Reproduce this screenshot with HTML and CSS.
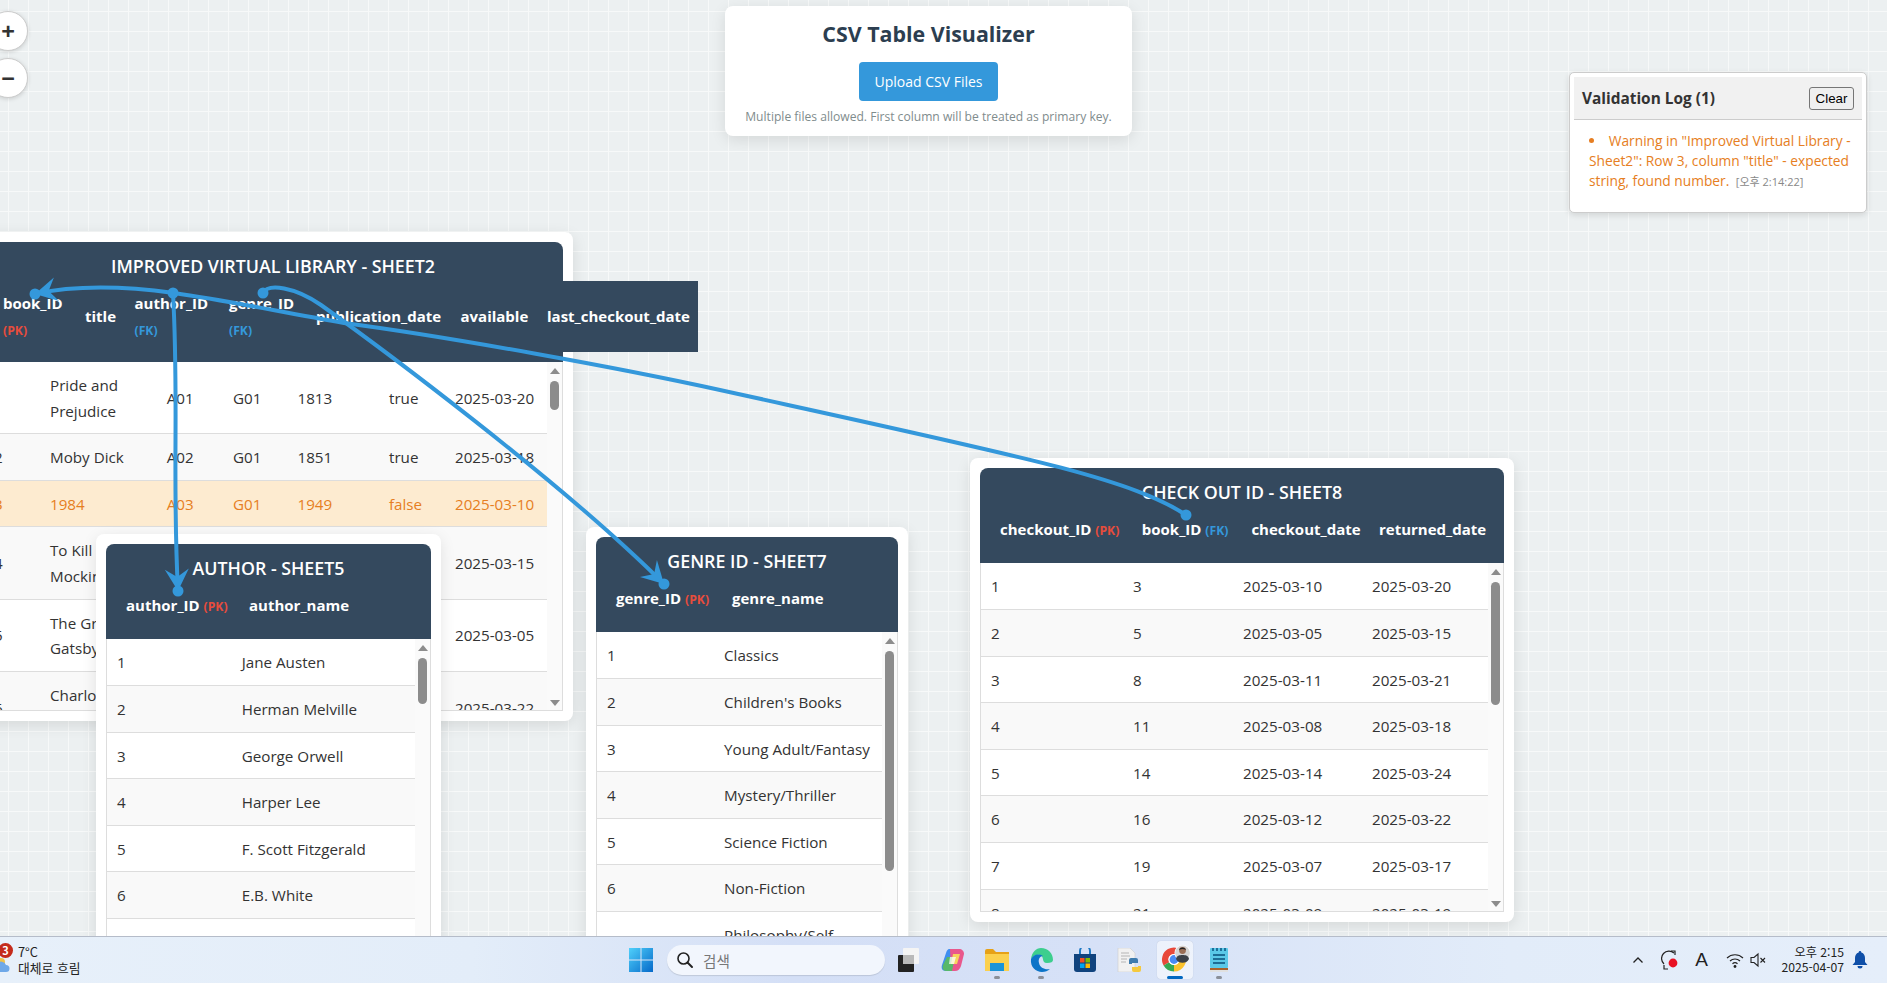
FILE: index.html
```html
<!DOCTYPE html>
<html lang="ko">

<head>
    <meta charset="UTF-8">
    <title>CSV Table Visualizer</title>
    <link rel="stylesheet" href="styles.css">
</head>

<body>
    <div class="canvas">

        <div class="zoom-controls">
            <button class="zoom-btn">+</button>
            <button class="zoom-btn">&minus;</button>
        </div>

        <div class="upload-card">
            <h1>CSV Table Visualizer</h1>
            <button class="upload-btn">Upload CSV Files</button>
            <p>Multiple files allowed. First column will be treated as primary key.</p>
        </div>

        <div class="log-panel">
            <div class="log-head">
                <h3>Validation Log (1)</h3>
                <button class="clear-btn">Clear</button>
            </div>
            <ul class="log-list">
                <li>Warning in "Improved Virtual Library - Sheet2": Row 3, column "title" - expected string, found number. <span class="log-time">[오후 2:14:22]</span></li>
            </ul>
        </div>

        <!-- Library table -->
        <div class="card card-main">
            <div class="card-head">
                <h2>IMPROVED VIRTUAL LIBRARY - SHEET2</h2>
                <table class="head-table">
                    <tr>
                        <th>book_ID <span class="key key-pk stacked">(PK)</span></th>
                        <th>title</th>
                        <th>author_ID <span class="key key-fk stacked">(FK)</span></th>
                        <th>genre_ID <span class="key key-fk stacked">(FK)</span></th>
                        <th>publication_date</th>
                        <th>available</th>
                        <th>last_checkout_date</th>
                    </tr>
                </table>
            </div>
            <div class="card-body">
                <div class="rows">
                    <table class="body-table">
                        <tr><td>1</td><td>Pride and Prejudice</td><td>A01</td><td>G01</td><td>1813</td><td>true</td><td>2025-03-20</td></tr>
                        <tr><td>2</td><td>Moby Dick</td><td>A02</td><td>G01</td><td>1851</td><td>true</td><td>2025-03-18</td></tr>
                        <tr class="row-warn"><td>3</td><td>1984</td><td>A03</td><td>G01</td><td>1949</td><td>false</td><td>2025-03-10</td></tr>
                        <tr><td>4</td><td>To Kill a Mockingbird</td><td>A04</td><td>G01</td><td>1960</td><td>true</td><td>2025-03-15</td></tr>
                        <tr><td>5</td><td>The Great Gatsby</td><td>A05</td><td>G01</td><td>1925</td><td>true</td><td>2025-03-05</td></tr>
                        <tr><td>6</td><td>Charlotte's Web</td><td>A06</td><td>G02</td><td>1952</td><td>true</td><td>2025-03-22</td></tr>
                    </table>
                </div>
                <div class="scrollbar">
                    <span class="arrow-up"></span>
                    <span class="thumb"></span>
                    <span class="arrow-down"></span>
                </div>
            </div>
        </div>

        <!-- Author table -->
        <div class="card card-author">
            <div class="card-head">
                <h2>AUTHOR - SHEET5</h2>
                <table class="head-table">
                    <tr>
                        <th>author_ID <span class="key key-pk">(PK)</span></th>
                        <th>author_name</th>
                    </tr>
                </table>
            </div>
            <div class="card-body">
                <div class="rows">
                    <table class="body-table">
                        <tr><td>1</td><td>Jane Austen</td></tr>
                        <tr><td>2</td><td>Herman Melville</td></tr>
                        <tr><td>3</td><td>George Orwell</td></tr>
                        <tr><td>4</td><td>Harper Lee</td></tr>
                        <tr><td>5</td><td>F. Scott Fitzgerald</td></tr>
                        <tr><td>6</td><td>E.B. White</td></tr>
                        <tr><td>7</td><td>J.K. Rowling</td></tr>
                    </table>
                </div>
                <div class="scrollbar">
                    <span class="arrow-up"></span>
                    <span class="thumb"></span>
                </div>
            </div>
        </div>

        <!-- Genre table -->
        <div class="card card-genre">
            <div class="card-head">
                <h2>GENRE ID - SHEET7</h2>
                <table class="head-table">
                    <tr>
                        <th>genre_ID <span class="key key-pk">(PK)</span></th>
                        <th>genre_name</th>
                    </tr>
                </table>
            </div>
            <div class="card-body">
                <div class="rows">
                    <table class="body-table">
                        <tr><td>1</td><td>Classics</td></tr>
                        <tr><td>2</td><td>Children's Books</td></tr>
                        <tr><td>3</td><td>Young Adult/Fantasy</td></tr>
                        <tr><td>4</td><td>Mystery/Thriller</td></tr>
                        <tr><td>5</td><td>Science Fiction</td></tr>
                        <tr><td>6</td><td>Non-Fiction</td></tr>
                        <tr><td>7</td><td>Philosophy/Self-<br>Help</td></tr>
                    </table>
                </div>
                <div class="scrollbar">
                    <span class="arrow-up"></span>
                    <span class="thumb"></span>
                </div>
            </div>
        </div>

        <!-- Checkout table -->
        <div class="card card-checkout">
            <div class="card-head">
                <h2>CHECK OUT ID - SHEET8</h2>
                <table class="head-table">
                    <tr>
                        <th>checkout_ID <span class="key key-pk">(PK)</span></th>
                        <th>book_ID <span class="key key-fk">(FK)</span></th>
                        <th>checkout_date</th>
                        <th>returned_date</th>
                    </tr>
                </table>
            </div>
            <div class="card-body">
                <div class="rows">
                    <table class="body-table">
                        <tr><td>1</td><td>3</td><td>2025-03-10</td><td>2025-03-20</td></tr>
                        <tr><td>2</td><td>5</td><td>2025-03-05</td><td>2025-03-15</td></tr>
                        <tr><td>3</td><td>8</td><td>2025-03-11</td><td>2025-03-21</td></tr>
                        <tr><td>4</td><td>11</td><td>2025-03-08</td><td>2025-03-18</td></tr>
                        <tr><td>5</td><td>14</td><td>2025-03-14</td><td>2025-03-24</td></tr>
                        <tr><td>6</td><td>16</td><td>2025-03-12</td><td>2025-03-22</td></tr>
                        <tr><td>7</td><td>19</td><td>2025-03-07</td><td>2025-03-17</td></tr>
                        <tr><td>8</td><td>21</td><td>2025-03-09</td><td>2025-03-19</td></tr>
                    </table>
                </div>
                <div class="scrollbar">
                    <span class="arrow-up"></span>
                    <span class="thumb"></span>
                    <span class="arrow-down"></span>
                </div>
            </div>
        </div>

        <!-- Relation lines between the tables -->
        <svg class="links" width="1887" height="983" viewBox="0 0 1887 983">
            <defs>
                <marker id="head" markerUnits="userSpaceOnUse" markerWidth="26" markerHeight="28" refX="24" refY="14" orient="auto">
                    <path d="M24 14 L2 2 L10 14 L2 26 Z" fill="#3498db" />
                </marker>
            </defs>
            <path class="link" marker-end="url(#head)" d="M1186 515 C1130 478 1020 456 720 390 C620 368 450 337 344 323 C280 312 230 301 174 293 C130 287 80 284 35 294" />
            <path class="link" marker-end="url(#head)" d="M173 293 C179 400 172 480 178 591" />
            <path class="link" marker-end="url(#head)" d="M263 293 C268 283 295 287 321 305 C370 340 560 480 664 584" />
            <circle class="dot" cx="35" cy="294" r="5.5" />
            <circle class="dot" cx="173" cy="293" r="5.5" />
            <circle class="dot" cx="263" cy="293" r="5.5" />
            <circle class="dot" cx="178" cy="591" r="5.5" />
            <circle class="dot" cx="664" cy="584" r="5.5" />
            <circle class="dot" cx="1186" cy="515" r="5.5" />
        </svg>

        <!-- Windows taskbar -->
        <div class="taskbar">
            <div class="weather">
                <span class="weather-badge">3</span>
                <svg class="weather-cloud" width="14" height="16" viewBox="0 0 14 16">
                    <circle cx="4" cy="5" r="4" fill="#f0c24a" />
                    <path d="M1 15 a4 4 0 0 1 -1 -8 a5 5 0 0 1 9 1 a3.5 3.5 0 0 1 0 7 Z" fill="#6ea8e8" />
                </svg>
                <div class="weather-text">
                    <span>7°C</span>
                    <span>대체로 흐림</span>
                </div>
            </div>

            <div class="task-center">
                <span class="task-icon">
                    <svg width="24" height="24" viewBox="0 0 24 24">
                        <defs>
                            <linearGradient id="win" x1="0" y1="0" x2="1" y2="1">
                                <stop offset="0" stop-color="#4fd0fb" />
                                <stop offset="1" stop-color="#0669c9" />
                            </linearGradient>
                        </defs>
                        <path d="M0 0 H11.5 V11.5 H0 Z M12.5 0 H24 V11.5 H12.5 Z M0 12.5 H11.5 V24 H0 Z M12.5 12.5 H24 V24 H12.5 Z" fill="url(#win)" />
                    </svg>
                </span>
                <div class="search-box">
                    <svg width="18" height="18" viewBox="0 0 18 18">
                        <circle cx="7.5" cy="7.5" r="5.5" fill="none" stroke="#222" stroke-width="1.6" />
                        <path d="M11.5 11.5 L16 16" stroke="#222" stroke-width="2" stroke-linecap="round" />
                    </svg>
                    <span>검색</span>
                </div>
                <span class="task-icon icon-taskview">
                    <svg width="22" height="24" viewBox="0 0 22 24">
                        <rect x="0" y="7" width="16" height="17" rx="1" fill="#222" />
                        <rect x="5" y="0" width="16" height="16" rx="1" fill="#f4f4f4" />
                        <rect x="5" y="7" width="11" height="9" fill="#b9b9b9" />
                    </svg>
                </span>
                <span class="task-icon">
                    <svg width="24" height="24" viewBox="0 0 24 24">
                        <path d="M8 1 H15 L11 23 H5 C1 23 0 20 1 17 L5 5 C6 2 7 1 8 1 Z" fill="#3f8ef0" />
                        <path d="M9 1 H18 C21 1 23 3 23 6 L20 18 C19 21 17 23 14 23 H10 Z" fill="#e9588c" />
                        <path d="M6 9 H14 L11 23 H5 C2 23 1 20 2 17 Z" fill="#58b86a" />
                        <path d="M12 6 H19 L16 16 H10 Z" fill="#f6d55c" />
                        <path d="M9 9 H15 L13 16 H8 Z" fill="#fff" opacity=".75" />
                    </svg>
                </span>
                <span class="task-icon running">
                    <svg width="24" height="22" viewBox="0 0 24 22">
                        <path d="M0 2 a2 2 0 0 1 2 -2 H8 L11 3 H24 V22 H0 Z" fill="#e6a117" />
                        <rect x="0" y="5" width="24" height="17" fill="#fbd04d" />
                        <rect x="5" y="14" width="14" height="8" fill="#1a94d8" />
                    </svg>
                </span>
                <span class="task-icon running">
                    <svg width="24" height="24" viewBox="0 0 24 24">
                        <path d="M12 0 C19 0 24 5 24 12 C24 14 22 15 18 15 C12 15 16 9 11 7 C6 6 3 10 2 11 C3 4 7 0 12 0 Z" fill="#3dce8e" />
                        <path d="M2 11 C1 19 7 24 13 24 C16 24 19 23 21 21 C16 22 11 20 10 15 C9 11 11 8 14 8 C9 5 4 7 2 11 Z" fill="#0c74c8" />
                    </svg>
                </span>
                <span class="task-icon">
                    <svg width="24" height="24" viewBox="0 0 24 24">
                        <path d="M7 7 V3 a5 5 0 0 1 10 0 V7" fill="none" stroke="#1f7ac4" stroke-width="2" />
                        <path d="M1 6 H23 V21 a3 3 0 0 1 -3 3 H4 a3 3 0 0 1 -3 -3 Z" fill="#10437e" />
                        <rect x="7" y="10" width="4.5" height="4.5" fill="#f25022" />
                        <rect x="12.5" y="10" width="4.5" height="4.5" fill="#7fba00" />
                        <rect x="7" y="15.5" width="4.5" height="4.5" fill="#00a4ef" />
                        <rect x="12.5" y="15.5" width="4.5" height="4.5" fill="#ffb900" />
                    </svg>
                </span>
                <span class="task-icon">
                    <svg width="24" height="24" viewBox="0 0 24 24">
                        <path d="M1 0 H13 L18 5 V24 H1 Z" fill="#f1f1f1" stroke="#ccc" stroke-width=".6" />
                        <path d="M4 5 H12 M4 8 H13 M4 11 H10 M4 14 H9" stroke="#b5b5b5" />
                        <path d="M15 10 h4 a2 2 0 0 1 2 2 v3 h-6 v1 h-3 v-4 a2 2 0 0 1 2 -2 Z" fill="#3f7cae" />
                        <path d="M21 24 h-4 a2 2 0 0 1 -2 -2 v-3 h6 v-1 h3 v4 a2 2 0 0 1 -2 2 Z" fill="#f5c93d" />
                    </svg>
                </span>
                <span class="task-icon active">
                    <svg width="30" height="30" viewBox="0 0 30 30">
                        <path d="M21.58 10.1 A8.75 8.75 0 0 0 6.42 18.9" fill="none" stroke="#e8483a" stroke-width="6.5" />
                        <path d="M6.42 18.9 A8.75 8.75 0 0 0 14 23.25" fill="none" stroke="#37a853" stroke-width="6.5" />
                        <path d="M14 23.25 A8.75 8.75 0 0 0 21.58 10.1" fill="none" stroke="#fbc22d" stroke-width="6.5" />
                        <circle cx="14" cy="14.5" r="5.6" fill="#fff" />
                        <circle cx="14" cy="14.5" r="4.4" fill="#4a8af4" />
                        <circle cx="22.5" cy="8" r="8" fill="#fff" />
                        <circle cx="22.5" cy="8" r="7.4" fill="#d5d5d5" />
                        <path d="M16 14 C16.5 10.5 19.5 10 22.5 10 C25.5 10 28.5 10.5 29 14 A7.4 7.4 0 0 1 16 14 Z" fill="#3c4148" />
                        <circle cx="22.5" cy="5.5" r="3.4" fill="#9a6e55" />
                        <path d="M19.1 5 C19.1 1.6 25.9 1.6 25.9 5 C23.5 3.6 21.5 3.6 19.1 5 Z" fill="#222" />
                    </svg>
                </span>
                <span class="task-icon running">
                    <svg width="18" height="24" viewBox="0 0 18 24">
                        <rect x="0" y="0" width="18" height="20" rx="1" fill="#5ac8e8" />
                        <path d="M3 0 V3 M7 0 V3 M11 0 V3 M15 0 V3" stroke="#1e6f9a" stroke-width="2" />
                        <path d="M3 7 H15 M3 11 H15 M3 15 H15" stroke="#1c6d96" stroke-width="2" />
                        <rect x="0" y="20" width="18" height="2" fill="#a8612c" />
                        <rect x="0" y="22" width="18" height="2" fill="#e0e0e0" />
                    </svg>
                </span>
            </div>

            <div class="tray">
                <svg width="12" height="8" viewBox="0 0 12 8">
                    <path d="M1.5 6.5 L6 2 L10.5 6.5" fill="none" stroke="#222" stroke-width="1.3" />
                </svg>
                <svg class="tray-gap" width="18" height="20" viewBox="0 0 18 20">
                    <path d="M3 14 A7 7 0 0 1 13 3" fill="none" stroke="#222" stroke-width="1.2" />
                    <path d="M10 1 H14 V5" fill="none" stroke="#222" stroke-width="1.2" />
                    <path d="M3 15 V19 H7" fill="none" stroke="#222" stroke-width="1.2" />
                    <circle cx="12" cy="13" r="4.4" fill="#e81123" />
                </svg>
                <span class="tray-ime">A</span>
                <svg class="tray-wifi" width="18" height="18" viewBox="0 0 18 18">
                    <path d="M1 7 A11.5 11.5 0 0 1 17 7 M4 10 A7.2 7.2 0 0 1 14 10 M6.5 12.8 A3.6 3.6 0 0 1 11.5 12.8" fill="none" stroke="#222" stroke-width="1.2" />
                    <circle cx="9" cy="15.5" r="1.4" fill="#222" />
                </svg>
                <svg class="tray-sound" width="16" height="16" viewBox="0 0 16 16">
                    <path d="M1 5.5 H4 L8 2 V14 L4 10.5 H1 Z" fill="none" stroke="#222" stroke-width="1.1" />
                    <path d="M10.5 6 L15 10.5 M15 6 L10.5 10.5" stroke="#222" stroke-width="1.1" />
                </svg>
                <div class="clock">
                    <span>오후 2:15</span>
                    <span>2025-04-07</span>
                </div>
                <svg class="tray-bell" width="16" height="18" viewBox="0 0 16 18">
                    <path d="M8 0 a1.3 1.3 0 0 1 1.3 1.4 C12 2.2 13 4.4 13 7 V11 L15.5 14 H0.5 L3 11 V7 C3 4.4 4 2.2 6.7 1.4 A1.3 1.3 0 0 1 8 0 Z" fill="#0f4fa8" />
                    <path d="M5.5 15 H10.5 A2.5 2.5 0 0 1 5.5 15 Z" fill="#0f4fa8" />
                </svg>
            </div>
        </div>
    </div>
</body>

</html>
```

FILE: styles.css
```css
* {
    box-sizing: border-box;
}

body {
    margin: 0;
    font-family: "Open Sans", "Noto Sans CJK KR", sans-serif;
    color: #333;
    overflow: hidden;
}

.canvas {
    position: relative;
    width: 1887px;
    height: 983px;
    overflow: hidden;
    background-color: #ecf0f1;
    background-image:
        linear-gradient(to right, #f7f9f9 1px, transparent 1px),
        linear-gradient(to bottom, #f7f9f9 1px, transparent 1px);
    background-size: 20px 20px;
    background-position: 8px 11px;
}

/* zoom buttons */
.zoom-controls {
    position: absolute;
    left: -12px;
    top: 11px;
    display: flex;
    flex-direction: column;
    gap: 7px;
}

.zoom-btn {
    width: 40px;
    height: 40px;
    padding: 0;
    border: 1px solid #ccc;
    border-radius: 50%;
    background: #fff;
    box-shadow: 0 1px 4px rgba(0, 0, 0, 0.15);
    color: #333;
    font-family: "Open Sans", sans-serif;
    font-size: 24px;
    font-weight: 700;
    line-height: 34px;
}

/* upload panel */
.upload-card {
    position: absolute;
    left: 725px;
    top: 6px;
    width: 407px;
    height: 130px;
    padding: 15px 0 0;
    background: #fff;
    border-radius: 8px;
    box-shadow: 0 4px 15px rgba(0, 0, 0, 0.1);
    display: flex;
    flex-direction: column;
    align-items: center;
}

.upload-card h1 {
    margin: 0;
    font-size: 21.4px;
    line-height: 26px;
    font-weight: 700;
    color: #2c3e50;
}

.upload-btn {
    margin-top: 15px;
    width: 139px;
    height: 39px;
    padding: 0;
    border: none;
    border-radius: 4px;
    background: #3498db;
    color: #fff;
    font-family: inherit;
    font-size: 14px;
}

.upload-card p {
    margin: 6px 0 0;
    font-size: 12.1px;
    line-height: 20px;
    color: #7f8c8d;
}

/* validation log */
.log-panel {
    position: absolute;
    left: 1569px;
    top: 72px;
    width: 298px;
    height: 141px;
    padding: 4px;
    background: #fff;
    border: 1px solid #ccc;
    border-radius: 5px;
    box-shadow: 0 2px 6px rgba(0, 0, 0, 0.12);
}

.log-head {
    display: flex;
    align-items: center;
    justify-content: space-between;
    height: 43px;
    padding: 0 8px;
    background: #f1f1f1;
    border-bottom: 1px solid #ccc;
}

.log-head h3 {
    margin: 0;
    font-size: 15.4px;
    font-weight: 700;
    color: #333;
}

.clear-btn {
    width: 45px;
    height: 23px;
    padding: 0;
    background: #efefef;
    border: 1px solid #767676;
    border-radius: 3px;
    color: #000;
    font-family: "Liberation Sans", sans-serif;
    font-size: 13.3px;
}

.log-list {
    margin: 0;
    padding: 11px 6px 0 15px;
    list-style: disc inside;
    font-size: 13.75px;
    line-height: 20px;
    color: #e67e22;
}

.log-time {
    margin-left: 3px;
    font-size: 11px;
    color: #888;
}

/* table cards */
.card {
    position: absolute;
    padding: 10px;
    background: #fff;
    border-radius: 8px;
    box-shadow: 0 4px 15px rgba(0, 0, 0, 0.1);
    display: flex;
    flex-direction: column;
}

.card-main {
    left: -27px;
    top: 232px;
    width: 600px;
    height: 489px;
}

.card-author {
    left: 96px;
    top: 534px;
    width: 345px;
    height: 480px;
}

.card-genre {
    left: 586px;
    top: 527px;
    width: 322px;
    height: 480px;
}

.card-checkout {
    left: 970px;
    top: 458px;
    width: 544px;
    height: 464px;
}

.card-head {
    padding: 10px;
    background: #34495e;
    border-radius: 8px 8px 0 0;
    color: #fff;
}

.card-head h2 {
    margin: 0;
    font-size: 17.8px;
    line-height: 28.8px;
    font-weight: 600;
    text-align: center;
}

.head-table,
.body-table {
    border-collapse: collapse;
    table-layout: fixed;
}

.head-table {
    background: #34495e;
}

.head-table th {
    padding: 10px;
    font-size: 15px;
    font-weight: 700;
    line-height: 25.6px;
    text-align: left;
    white-space: nowrap;
    overflow: visible;
}

.key {
    font-size: 12.2px;
    font-weight: 700;
}

.key-pk {
    color: #e74c3c;
}

.key-fk {
    color: #3498db;
}

.stacked {
    display: block;
    transform: translateY(2px);
}

.card-body {
    display: flex;
    flex: 1;
    min-height: 0;
    border: 1px solid #ddd;
    border-top: none;
}

.rows {
    flex: 1;
    overflow: hidden;
}

.body-table {
    width: 100%;
}

.body-table td {
    padding: 11px 10px 9px;
    font-size: 15.2px;
    line-height: 25.6px;
    color: #333;
    border-bottom: 1px solid #ddd;
    vertical-align: middle;
}

.body-table tr:nth-child(even) td {
    background: #f9f9f9;
}

.body-table tr.row-warn td {
    background: #fdebd0;
    color: #e67e22;
}

/* scroll gutter */
.scrollbar {
    flex: none;
    width: 15px;
    background: #fafafa;
    display: flex;
    flex-direction: column;
    align-items: center;
    padding: 6px 0 4px;
}

.arrow-up,
.arrow-down {
    width: 0;
    height: 0;
    border-left: 5px solid transparent;
    border-right: 5px solid transparent;
}

.arrow-up {
    border-bottom: 6px solid #8c8c8c;
}

.arrow-down {
    margin-top: auto;
    border-top: 6px solid #8c8c8c;
}

.thumb {
    width: 9px;
    margin-top: 7px;
    border-radius: 5px;
    background: #8c8c8c;
}

/* column widths */
.card-main .head-table {
    width: 705px;
}

.card-main .head-table th:nth-child(1) { width: 82px; }
.card-main .head-table th:nth-child(2) { width: 49.5px; }
.card-main .head-table th:nth-child(3) { width: 94.5px; }
.card-main .head-table th:nth-child(4) { width: 87px; }
.card-main .head-table th:nth-child(5) { width: 144.5px; }
.card-main .head-table th:nth-child(6) { width: 86.5px; }
.card-main .head-table th:nth-child(7) { width: 161px; }

.card-main .body-table td:nth-child(1) { width: 56px; }
.card-main .body-table td:nth-child(2) { width: 116.7px; }
.card-main .body-table td:nth-child(3) { width: 66.3px; }
.card-main .body-table td:nth-child(4) { width: 64.5px; }
.card-main .body-table td:nth-child(5) { width: 91.5px; }
.card-main .body-table td:nth-child(6) { width: 66px; }
.card-main .body-table td:nth-child(7) { width: 102px; }

.card-author .head-table { width: 242px; }
.card-author .head-table th:nth-child(1) { width: 123px; }
.card-author .head-table th:nth-child(2) { width: 119px; }
.card-author .body-table td:nth-child(1) { width: 124.7px; }

.card-genre .head-table { width: 227px; }
.card-genre .head-table th:nth-child(1) { width: 116px; }
.card-genre .head-table th:nth-child(2) { width: 111px; }
.card-genre .body-table td:nth-child(1) { width: 117px; }

.card-checkout .head-table { width: 504.6px; }
.card-checkout .head-table th:nth-child(1) { width: 141.8px; }
.card-checkout .head-table th:nth-child(2) { width: 109.6px; }
.card-checkout .head-table th:nth-child(3) { width: 127.6px; }
.card-checkout .head-table th:nth-child(4) { width: 125.6px; }

.card-checkout .body-table td:nth-child(1) { width: 142px; }
.card-checkout .body-table td:nth-child(2) { width: 110px; }
.card-checkout .body-table td:nth-child(3) { width: 129px; }
.card-checkout .body-table td:nth-child(4) { width: 126px; }

/* scrollbar thumb sizes */
.card-main .thumb { height: 29px; }
.card-author .thumb { height: 46px; }
.card-genre .thumb { height: 220px; }
.card-checkout .thumb { height: 123px; }

/* relation lines */
.links {
    position: absolute;
    left: 0;
    top: 0;
    pointer-events: none;
}

.link {
    fill: none;
    stroke: #3498db;
    stroke-width: 4;
}

.dot {
    fill: #3498db;
}

/* taskbar */
.taskbar {
    position: absolute;
    left: 0;
    right: 0;
    bottom: 0;
    height: 47px;
    display: grid;
    grid-template-columns: 619px auto 1fr;
    align-items: center;
    border-top: 1px solid #b5bcc9;
    background: linear-gradient(90deg, #e7f0fa 0%, #e3edf9 25%, #d4dff6 42%, #d6e1f7 58%, #e2ecf9 80%, #e5eefa 100%);
    font-family: "Noto Sans CJK KR", "Noto Sans", sans-serif;
    color: #222;
}

.weather {
    position: relative;
    height: 46px;
}

.weather-badge {
    position: absolute;
    left: -2px;
    top: 6px;
    width: 15px;
    height: 15px;
    border-radius: 50%;
    background: #c42b1c;
    color: #fff;
    font-size: 11px;
    font-weight: 700;
    line-height: 15px;
    text-align: center;
}

.weather-cloud {
    position: absolute;
    left: -3px;
    top: 20px;
}

.weather-text {
    position: absolute;
    left: 18px;
    top: 7px;
    display: flex;
    flex-direction: column;
    font-size: 12.8px;
    line-height: 15.5px;
    white-space: nowrap;
}

.task-center {
    display: flex;
    align-items: center;
}

.task-icon {
    position: relative;
    width: 44px;
    height: 38px;
    display: flex;
    align-items: center;
    justify-content: center;
}

.task-icon.running::after,
.task-icon.active::after {
    content: "";
    position: absolute;
    bottom: 0;
    left: 19px;
    width: 6px;
    height: 3px;
    border-radius: 2px;
    background: #8a8f99;
}

.task-icon.active {
    width: 36px;
    margin: 0 4px 0 6px;
    background: rgba(255, 255, 255, 0.55);
    border-radius: 4px;
    box-shadow: 0 0 1px rgba(0, 0, 0, 0.2);
}

.task-icon.active::after {
    left: 10px;
    width: 16px;
    background: #0067c0;
}

.search-box {
    width: 218px;
    height: 30px;
    margin: 0 0 0 4px;
    padding: 0 0 0 9px;
    display: flex;
    align-items: center;
    gap: 9px;
    background: #f2f6fd;
    border-radius: 15px;
    box-shadow: 0 1px 1px rgba(0, 0, 0, 0.12);
    font-size: 14.6px;
    color: #777;
}

.icon-taskview {
    margin-left: 2px;
}

.tray {
    display: flex;
    align-items: center;
    justify-content: flex-end;
    padding-right: 19px;
}

.tray-gap {
    margin-left: 17px;
}

.tray-ime {
    margin-left: 16px;
    font-family: "Liberation Sans", sans-serif;
    font-size: 19px;
    font-weight: 400;
}

.tray-wifi {
    margin-left: 18.5px;
}

.tray-sound {
    margin-left: 6px;
}

.clock {
    margin-left: 15px;
    display: flex;
    flex-direction: column;
    align-items: flex-end;
    font-size: 12.2px;
    line-height: 15.5px;
}

.tray-bell {
    margin-left: 8px;
}
```
